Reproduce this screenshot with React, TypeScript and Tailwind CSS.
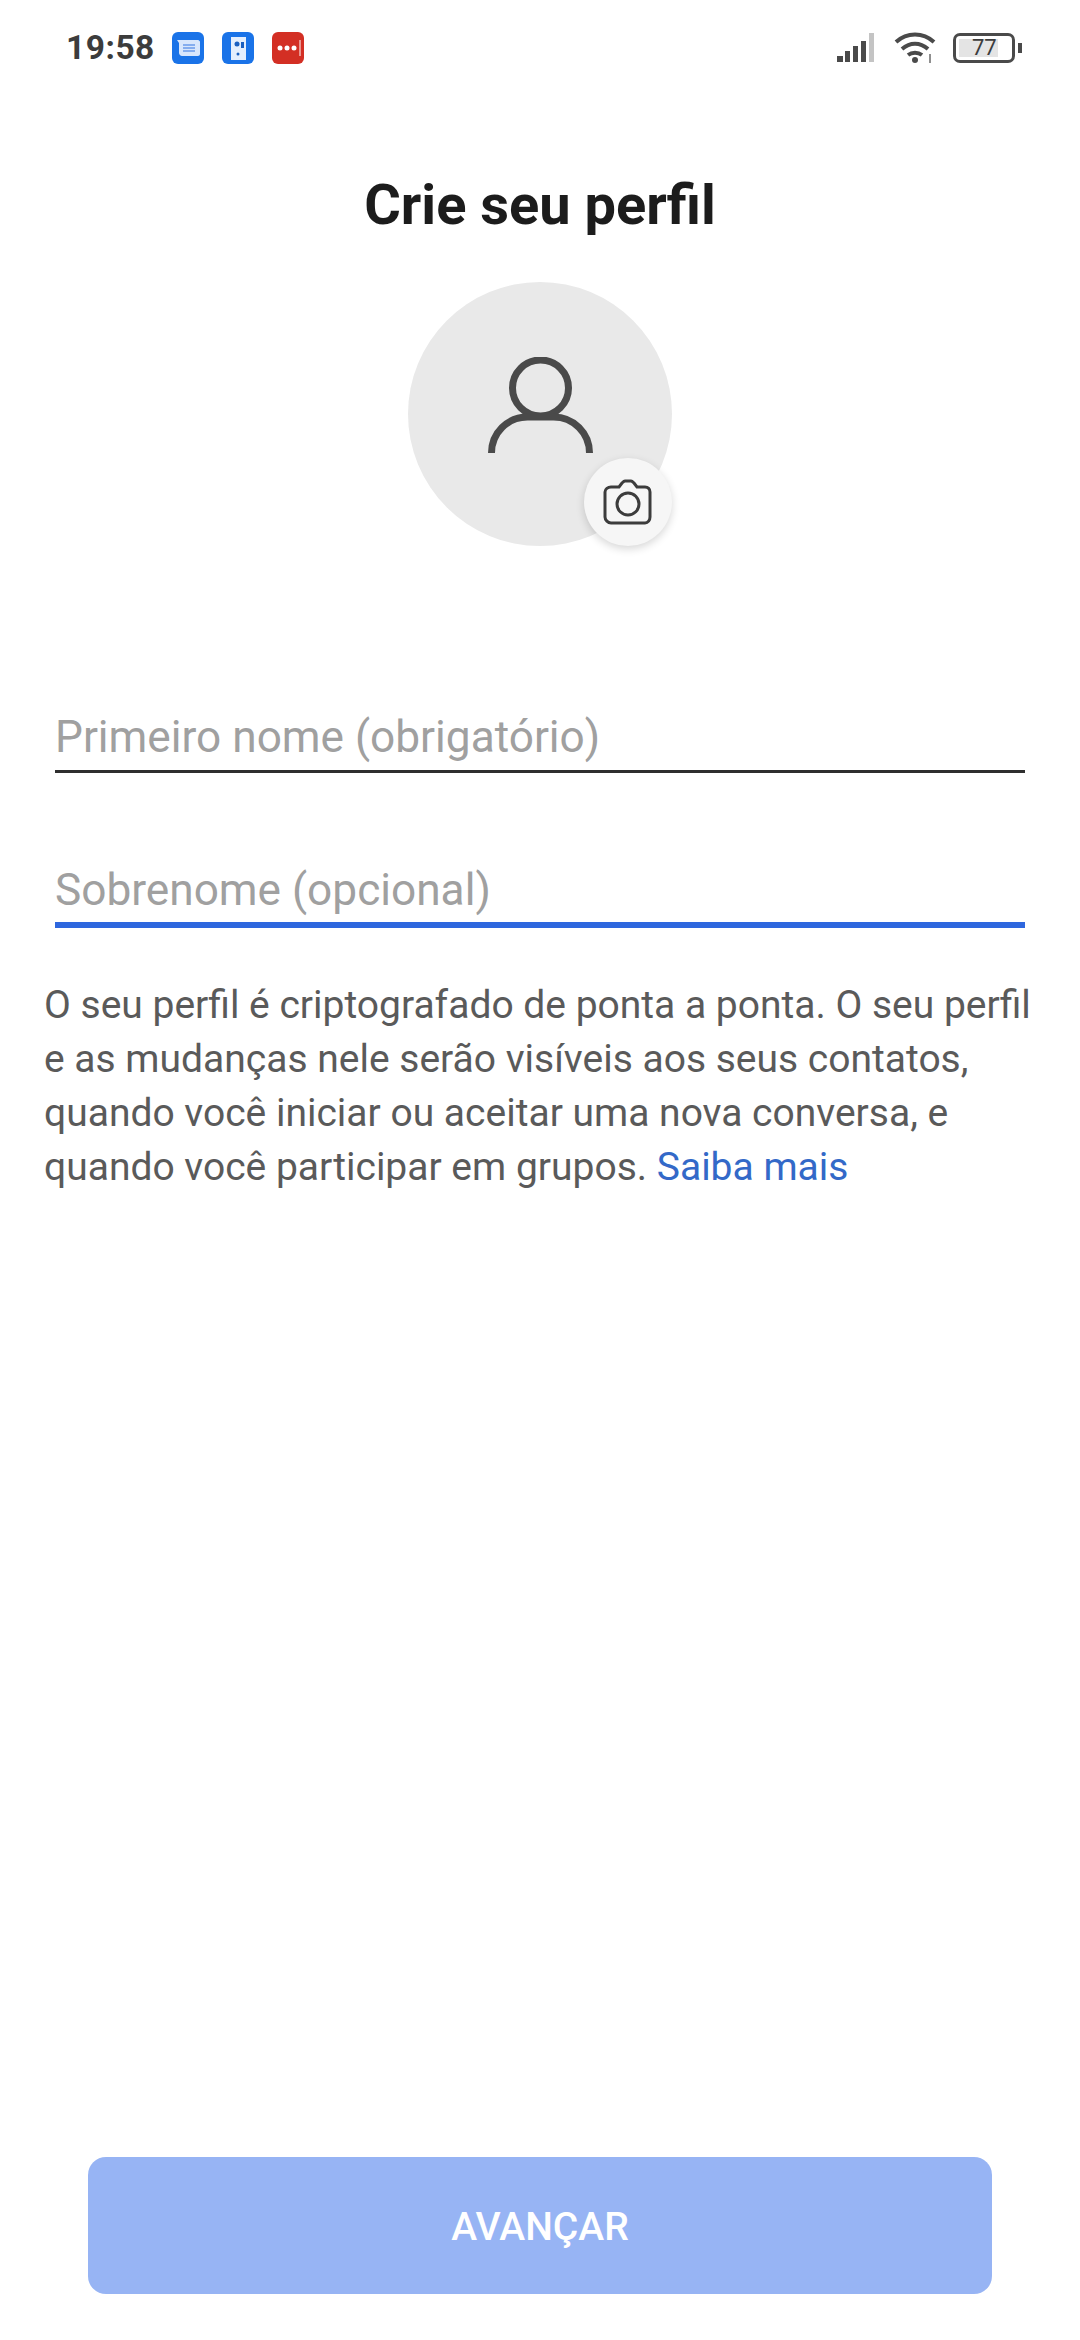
const StatusBar = () => (
  <div className="flex h-[96px] items-center justify-between pl-[66px] pr-[58px]">
    <div className="flex items-center">
      <span className="w-[88px] text-[33.500px] font-bold tracking-[0.5px] text-[#3c3c3c]">19:58</span>
      <div className="ml-[18px] flex items-center gap-[18px]">
        <div className="flex h-[32px] w-[32px] items-center justify-center rounded-[6px] bg-[#1a73e8]">
          <svg viewBox="0 0 32 32" className="h-[32px] w-[32px]">
            <path d="M5 8h21c1 0 2 1 2 2v12c0 1-1 2-2 2H10c-1.500 0-3-1.500-3-3V11z" fill="#d8e6fc" />
            <path d="M11 13h12M11 16h12M11 19h12" stroke="#6a9bea" strokeWidth="1.500" />
          </svg>
        </div>
        <div className="flex h-[32px] w-[32px] items-center justify-center rounded-[6px] bg-[#1a73e8]">
          <svg viewBox="0 0 32 32" className="h-[32px] w-[32px]">
            <rect x="9" y="5" width="15" height="23" fill="#e4eefd" />
            <circle cx="15" cy="12" r="2.500" fill="#1a5fc0" />
            <rect x="19" y="10" width="3" height="6" fill="#1a5fc0" />
            <circle cx="16" cy="22" r="1.500" fill="#1a5fc0" />
          </svg>
        </div>
        <div className="flex h-[32px] w-[32px] items-center justify-center rounded-[6px] bg-[#d32f24]">
          <svg viewBox="0 0 32 32" className="h-[32px] w-[32px]">
            <circle cx="8" cy="16" r="2.500" fill="#fff" />
            <circle cx="15" cy="16" r="2.500" fill="#fff" />
            <circle cx="22" cy="16" r="2.500" fill="#fff" />
            <path d="M28 8v16" stroke="#fff" strokeWidth="1" />
          </svg>
        </div>
      </div>
    </div>
    <div className="flex items-center gap-[16px]">
      <svg viewBox="0 0 42 32" className="h-[32px] w-[42px]">
        <rect x="2" y="24" width="6" height="6" fill="#4a4a4a" />
        <rect x="10" y="19" width="5" height="11" fill="#4a4a4a" />
        <rect x="18" y="14" width="5" height="16" fill="#4a4a4a" />
        <rect x="26" y="9" width="5" height="21" fill="#4a4a4a" />
        <rect x="34" y="1" width="5" height="29" fill="#c4c4c4" />
      </svg>
      <svg viewBox="0 0 44 36" className="h-[36px] w-[44px]">
        <path d="M3 12c11-10 27-10 38 0" fill="none" stroke="#4a4a4a" strokeWidth="4" />
        <path d="M9 19c8-7 18-7 26 0" fill="none" stroke="#4a4a4a" strokeWidth="4" />
        <path d="M15 25c4-3 10-3 14 0" fill="none" stroke="#4a4a4a" strokeWidth="4" />
        <circle cx="22" cy="30" r="3" fill="#4a4a4a" />
        <path d="M37 24v9" stroke="#6a6a6a" strokeWidth="1.500" />
      </svg>
      <div className="flex items-center gap-[3px]">
        <div className="flex h-[30px] w-[62px] items-center rounded-[7px] border-[3px] border-[#4a4a4a] p-[3px]">
          <div className="flex h-full w-[77%] items-center justify-center bg-[#e4e4e4] pl-[12px] text-[22px] leading-none text-[#3c3c3c]">77</div>
        </div>
        <div className="h-[10px] w-[4px] bg-[#4a4a4a]" />
      </div>
    </div>
  </div>
);

const Avatar = () => (
  <div className="relative h-[264px] w-[264px] rounded-full bg-[#e9e9e9]">
    <div className="flex h-full justify-center pt-[75px]">
      <svg viewBox="0 0 105 96" className="h-[96px] w-[105px]" fill="none" stroke="#4a4a4a" strokeWidth="7">
        <circle cx="52.500" cy="31" r="28" />
        <path d="M3.500 96c0-20 16-36 36-36h26c20 0 36 16 36 36" />
      </svg>
    </div>
    <div className="absolute bottom-0 right-0 flex h-[88px] w-[88px] items-center justify-center rounded-full bg-[#f6f6f6] shadow-[0_3px_8px_rgba(0,0,0,0.16)]">
      <svg viewBox="0 0 50 46" className="h-[46px] w-[50px]" fill="none" stroke="#3c3c3c" strokeWidth="3">
        <path d="M8 8h8l3-4c1-1 2-2 3-2h6c1 0 2 1 3 2l3 4h8c3 0 5 2 5 5v25c0 3-2 6-5 6H8c-3 0-6-3-6-6V13c0-3 3-5 6-5z" />
        <circle cx="25" cy="25" r="11" />
      </svg>
    </div>
  </div>
);

export default function App() {
  return (
    <div className="flex h-[2340px] flex-col bg-white font-['Roboto',sans-serif]">
      <StatusBar />
      <h1 className="mt-[76px] text-center text-[56px] font-bold leading-[66px] text-[#1c1c1c]">Crie seu perfil</h1>
      <div className="mt-[44px] flex justify-center">
        <Avatar />
      </div>
      <div className="mt-[140px] px-[55px]">
        <div className="h-[87px] border-b-[3px] border-[#2e2e2e] pt-[15px] text-[44.200px] leading-[72px] text-[#a0a0a0]">Primeiro nome (obrigatório)</div>
        <div className="mt-[66px] h-[89px] border-b-[6px] border-[#2e67de] pt-[15px] text-[44.200px] leading-[72px] text-[#a0a0a0]">Sobrenome (opcional)</div>
      </div>
      <p className="mt-[50px] px-[44px] text-[39px] leading-[54px] text-[#5a5a5a]">
        O seu perfil é criptografado de ponta a ponta. O seu perfil e as mudanças nele serão visíveis aos seus contatos, quando você iniciar ou aceitar uma nova conversa, e quando você participar em grupos. <span className="text-[#3369c8]">Saiba mais</span>
      </p>
      <div className="mt-auto px-[88px] pb-[46px]">
        <div className="flex h-[137px] items-center justify-center rounded-[18px] bg-[#97b4f4] pt-[4px] text-[39px] font-medium text-white">AVANÇAR</div>
      </div>
    </div>
  );
}
